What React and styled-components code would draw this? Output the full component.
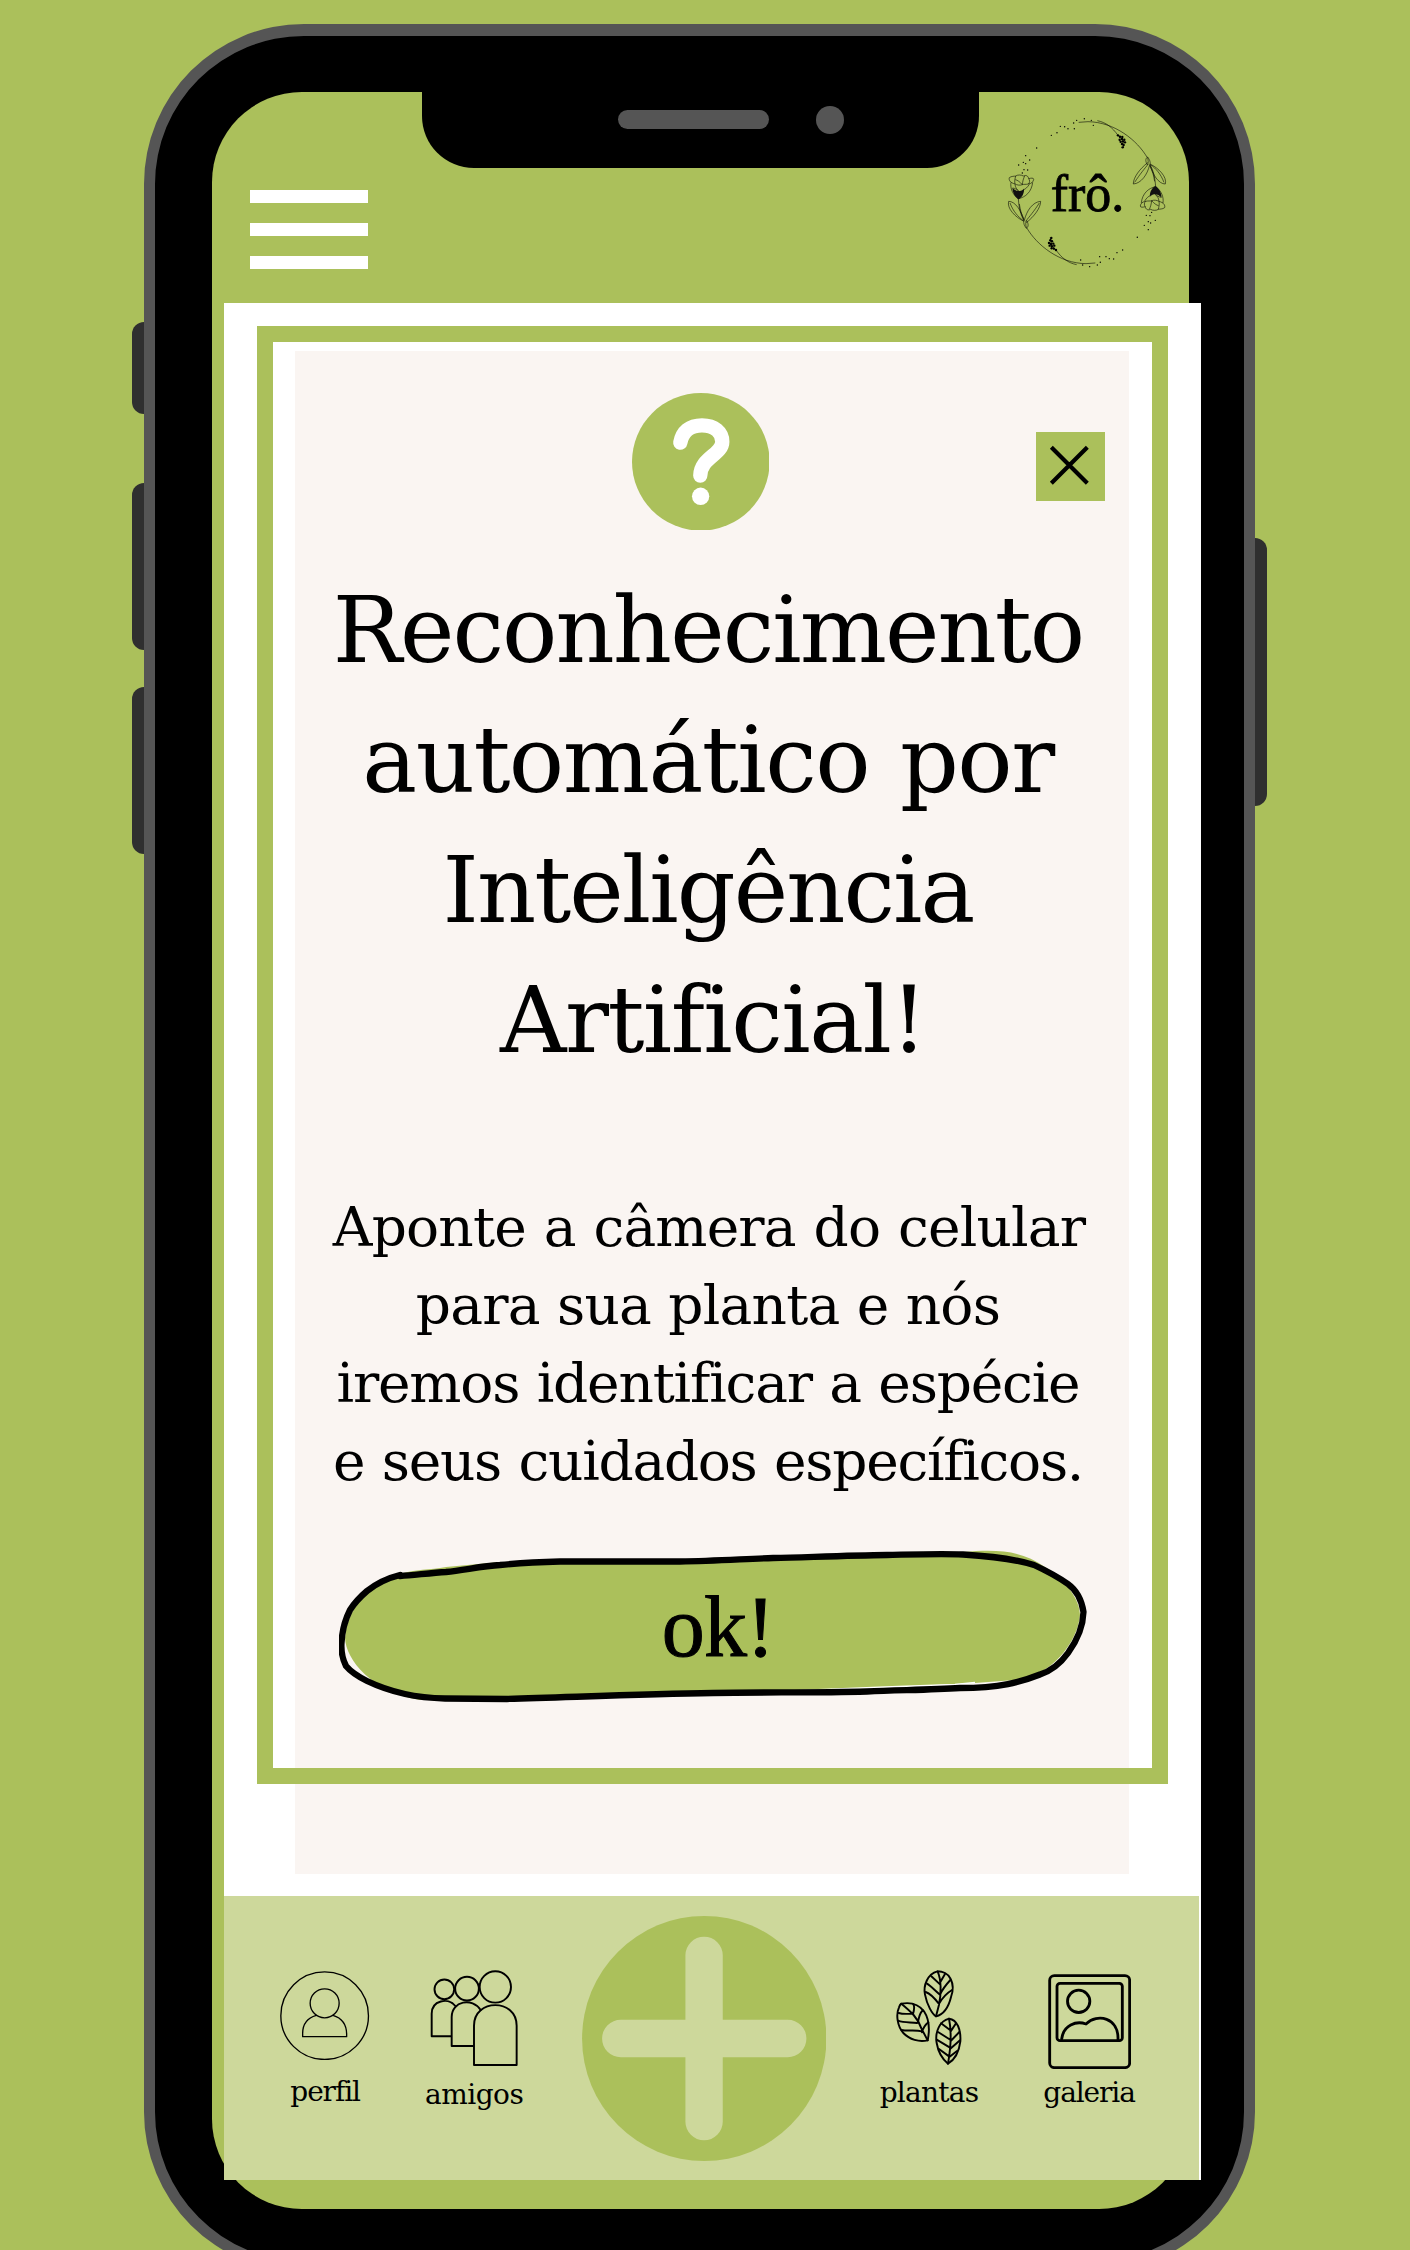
import React from "react";
import styled, { createGlobalStyle } from "styled-components";

const green = "#abc05b";
const paleGreen = "#cdd89b";
const slab = `"DejaVu Serif", "Liberation Serif", serif`;
const didone = `"Liberation Serif", serif`;

const GlobalStyle = createGlobalStyle`
  *, *::before, *::after { box-sizing: border-box; }
  body { margin: 0; background: ${green}; color: #000; }
  svg { display: block; }
`;

const Page = styled.main`
  display: flex;
  align-items: flex-start;
  width: 1410px;
  height: 2250px;
  padding: 24px 0 0 132px;
  overflow: hidden;
  background: ${green};
`;

const ButtonRail = styled.div`
  display: flex;
  flex-direction: column;
  flex: none;
  width: 12px;
  padding-top: ${(p) => p.$offset}px;
`;

const SideButton = styled.span`
  height: ${(p) => p.$height}px;
  margin-bottom: ${(p) => p.$gap || 0}px;
  background: #2f2f2f;
  border-radius: ${(p) => (p.$right ? "0 12px 12px 0" : "12px 0 0 12px")};
`;

const Body = styled.div`
  flex: none;
  width: 1111px;
  height: 2247.5px;
  padding: 56px 0 0 57px;
  border: 11.5px solid #555;
  border-width: 12px 11px 11px;
  border-radius: 160px;
  background: #000;
`;

const Screen = styled.div`
  width: 977px;
  height: 2116.5px;
  border-radius: 90px;
  background: ${green};
`;

const TopBar = styled.header`
  display: flex;
  align-items: flex-start;
  height: 211px;
  padding-left: 38px;
`;

const MenuButton = styled.button`
  display: grid;
  gap: 20px;
  flex: none;
  width: 118px;
  margin: 98px 54px 0 0;
  padding: 0;
  border: 0;
  background: none;
`;

const MenuLine = styled.span`
  height: 13px;
  background: #fff;
`;

const Notch = styled.div`
  display: flex;
  flex: none;
  width: 557px;
  height: 76px;
  padding: 13.5px 0 0 195.5px;
  border-radius: 0 0 52px 52px;
  background: #000;
`;

const Speaker = styled.span`
  width: 151.5px;
  height: 18.5px;
  margin-top: 4.5px;
  border-radius: 9.5px;
  background: #555;
`;

const Camera = styled.span`
  width: 28px;
  height: 28px;
  margin-left: 47px;
  border-radius: 50%;
  background: #555;
`;

const LogoArt = styled.svg`
  flex: none;
  width: 163.3px;
  height: 155px;
  margin: 23px 0 0 26px;
`;

const LogoText = styled.text`
  font: 156px ${didone};
  stroke: #000;
  stroke-width: 2.5px;
`;

const Content = styled.section`
  width: 977px;
  height: 1877px;
  margin-left: 11.7px;
  background: #fff;
`;

const Stack = styled.div`
  display: grid;
  height: 1593px;
  align-items: start;
  justify-items: start;
`;

const Card = styled.article`
  grid-area: 1 / 1;
  width: 834px;
  height: 1523px;
  margin: 48px 0 0 71.3px;
  padding-top: 41.7px;
  background: #faf5f2;
`;

const Frame = styled.div`
  grid-area: 1 / 1;
  width: 911px;
  height: 1457.5px;
  margin: 23px 0 0 33.6px;
  border: 16px solid ${green};
  pointer-events: none;
`;

const CardTop = styled.div`
  display: grid;
  grid-template-columns: 336.7px 137.6px 1fr;
  height: 137.6px;
`;

const HelpIcon = styled.svg`
  grid-column: 2;
  width: 137.6px;
  height: 137.6px;
`;

const CloseButton = styled.button`
  justify-self: end;
  width: 69px;
  height: 69px;
  margin: 39px 24px 0 0;
  padding: 0;
  border: 0;
  background: ${green};
`;

const Title = styled.h1`
  width: 826px;
  margin: 35.7px 0 0;
  font: 400 92px/130px ${slab};
  text-align: center;
`;

const Description = styled.p`
  width: 826px;
  margin: 102px 0 0;
  font: 400 55px/78px ${slab};
  text-align: center;
`;

const Line = styled.span`
  display: block;
  padding-left: ${(p) => p.$indent || 0}px;
  letter-spacing: ${(p) => p.$tracking}px;
  word-spacing: ${(p) => p.$wordGap || 0}px;
  white-space: nowrap;
`;

const OkButton = styled.button`
  display: grid;
  place-items: center;
  width: 750px;
  height: 160px;
  margin: 45px 0 0 44px;
  padding: 0;
  border: 0;
  background: none;
  color: #000;
`;

const OkShape = styled.svg`
  grid-area: 1 / 1;
  width: 750px;
  height: 160px;
`;

const OkLabel = styled.span`
  grid-area: 1 / 1;
  padding: 4px 0 0 8px;
  font: 86px/96px ${didone};
  letter-spacing: -0.8px;
  -webkit-text-stroke: 1px #000;
`;

const TabBar = styled.nav`
  display: grid;
  grid-template-columns: 149.5px 148.5px 311.5px 138.2px 182px;
  justify-items: center;
  align-items: start;
  width: 975.5px;
  height: 284.3px;
  padding-left: 26.7px;
  background: ${paleGreen};
`;

const Tab = styled.a`
  display: grid;
  justify-items: center;
  align-content: start;
  grid-template-rows: ${(p) => p.$labelTop}px 34px;
  padding-top: 74px;
  font: 28px/34px ${slab};
  letter-spacing: ${(p) => p.$tracking}px;
`;

const TabIcon = styled.svg`
  width: ${(p) => p.$w}px;
  height: ${(p) => p.$h}px;
  margin-top: ${(p) => p.$top || 0}px;
  fill: none;
  stroke: #000;
  stroke-width: ${(p) => p.$stroke};
  stroke-linecap: round;
  stroke-linejoin: round;
`;

const AddIcon = styled.svg`
  width: 244.5px;
  height: 245px;
  margin-top: 19.7px;
`;

const DOTS = [
  [137, 167], [149, 180], [116, 195], [130, 187], [137, 191], [132, 209],
  [143, 210], [127, 219], [170, 144], [214, 106], [231, 98], [241, 79],
  [254, 80], [264, 86], [283, 86], [281, 69], [290, 61], [313, 56],
  [334, 61], [340, 76],
];

const BERRIES = [
  [214, 414], [211, 421], [216, 424], [207, 429], [213, 432], [220, 431],
  [209, 437], [216, 439], [223, 437], [215, 445], [222, 446], [228, 450],
];

/* One half of the wreath; the other half is the same drawing turned around. */
function WreathHalf({ turned }) {
  return (
    <g transform={turned ? "rotate(180 321 278)" : undefined}>
      <g fill="none" stroke="#000" strokeWidth="2" strokeOpacity=".85">
        <path d="M140 383C170 435 238 490 318 491L346 489M228 450C245 474 264 489 290 494" />
        <path d="M115 296C117 325 122 345 132 362M118 312C121 330 124 343 132 358" />
        <path d="M132 364C106 352 80 325 86 304C106 304 124 332 132 362M90 309C100 335 114 350 130 362" />
        <path d="M133 361C140 332 158 306 182 304C182 324 162 350 139 368M178 309C162 334 148 350 137 364" />
        <path d="M132 361C129 370 134 378 139 385C147 380 145 370 140 362C136 366 137 374 139 383" />
        <path d="M105 252C90 248 86 240 88 233C94 228 104 229 107 228C112 224 124 224 130 228C138 224 145 228 146 236C153 234 161 233 161 238C160 246 154 251 145 252C138 254 131 252 127 254C119 257 111 255 105 252C103 244 105 236 107 228M127 254C120 246 112 240 106 239M127 254C128 244 130 236 134 228M145 252C150 248 150 240 146 236" />
        <path d="M93 247C90 265 98 284 115 296C136 292 155 276 158 247M105 253C106 262 110 268 116 272M98 264C106 265 112 269 116 274M148 253C142 262 137 267 131 269" />
      </g>
      <path d="M97 263C104 271 113 274 119 273C125 272 129 269 132 266C133 276 129 290 116 298C105 292 98 279 97 263Z" fill="#111" />
      <path d="M228 450L214 436L211 412" stroke="#000" strokeWidth="2" fill="none" />
      {BERRIES.map(([x, y]) => <circle key={`${x}-${y}`} cx={x} cy={y} r="3.6" />)}
      {DOTS.map(([x, y]) => <circle key={`${x}-${y}`} cx={x} cy={y} r="2.1" />)}
    </g>
  );
}

function Logo() {
  return (
    <LogoArt viewBox="75 45 490 465">
      <WreathHalf />
      <WreathHalf turned />
      <LogoText x="212" y="333">frô.</LogoText>
    </LogoArt>
  );
}

function Ok() {
  return (
    <OkButton>
      <OkShape viewBox="339 1545 750 160">
        <path fill={green} d="M400 1574C415 1569 430 1570 446 1567L500 1562L680 1560L963 1552C1000 1549 1022 1551 1045 1567C1066 1580 1080 1600 1080 1615C1078 1642 1050 1678 1015 1680L975 1683L827 1690L507 1699L420 1700C372 1692 346 1660 345 1638C348 1605 370 1585 400 1574Z" />
        <path fill="none" stroke="#fff" strokeWidth="1.6" d="M800 1690.5L885 1687L955 1684.5L975 1682.5" />
        <path fill="none" stroke="#000" strokeWidth="6.3" strokeLinejoin="round" d="M400 1576C414 1575 431 1573 446 1572C465 1570 482 1566 500 1565C520 1563 540 1562 560 1561.5L680 1561.5C715 1561 743 1559 773 1558C812 1557 850 1555.5 887 1555C912 1554.5 940 1553.5 963 1554.5C988 1556 1012 1558 1034 1565C1047 1571 1058 1577 1068 1584C1079 1592 1082 1602 1083.500 1612C1083 1628 1076 1642 1068 1653C1060 1664 1051 1671 1040 1674.500C1021 1682 1000 1688 960 1688C929 1690 898 1690 867 1691.5C815 1693 764 1692 713 1693C645 1694 576 1697 507 1699L445 1698.5C417 1698 390 1692 367 1681C359 1677 351 1672 346 1666C342 1658 341 1651 341.5 1643C342 1631 345 1620 350 1610C355 1602 360 1597 367 1591C377 1583 388 1578 400 1575Z" />
      </OkShape>
      <OkLabel>ok!</OkLabel>
    </OkButton>
  );
}

function Tabs() {
  return (
    <TabBar>
      <Tab $labelTop={105} $tracking={-1.1}>
        <TabIcon viewBox="242 272 268 268" $w={89.3} $h={89.3} $top={0.7} $stroke={4}>
          <circle cx="376" cy="406" r="131.5" />
          <circle cx="376" cy="369" r="43.5" />
          <path d="M351 405C327 412 309 430 310 462V469H442V462C442 430 424 412 401 405" />
        </TabIcon>
        perfil
      </Tab>
      <Tab $labelTop={108} $tracking={-0.5}>
        <TabIcon viewBox="691 269 264 289" $w={88} $h={96.3} $top={-0.4} $stroke={5.8}>
          <circle cx="734" cy="327" r="29.5" />
          <circle cx="802" cy="325" r="35.5" />
          <circle cx="887" cy="320" r="47" />
          <path d="M767 377C745 350 696 360 696 400V468H753" />
          <path d="M843 389C818 350 756 362 756 410V497H820" />
          <path d="M823 554V436C823 354 951 354 951 436V554Z" />
        </TabIcon>
        amigos
      </Tab>
      <AddIcon viewBox="69 107 733 735">
        <ellipse cx="435.5" cy="474.5" rx="366.5" ry="367.5" fill={green} />
        <path d="M435 225V724M185 474.500H686" stroke={paleGreen} strokeWidth="112" strokeLinecap="round" fill="none" />
      </AddIcon>
      <Tab $labelTop={106} $tracking={-0.75}>
        <TabIcon viewBox="171 271 197 284" $w={65.7} $h={94.7} $top={0.3} $stroke={5.8}>
          <path d="M295 275C266 282 252 318 258 345C264 376 280 404 291 410C312 405 328 385 336 352C343 333 342 312 335 298C328 282 310 275 295 275Z" />
          <path d="M296 276C307 300 307 342 300 375L291 410M277 290L303 314M264 312C277 320 290 335 304 346M260 337C275 342 288 357 300 373M318 283L304 307M334 301C324 312 312 325 304 343M339 331C324 340 310 355 300 372" />
          <path d="M187 372C215 367 240 375 255 395C270 418 273 448 266 482C240 488 212 480 193 460C175 440 170 405 180 383C182 377 184 374 187 372Z" />
          <path d="M187 372C215 395 237 415 247 446L266 482M179 400C192 404 205 403 217 402M177 423C196 430 215 427 234 430M187 451C208 455 228 450 249 455M223 374C228 382 225 393 222 403M252 392C240 400 241 414 236 429M268 428C258 436 252 446 249 458" />
          <path d="M330 417C303 424 287 455 293 490C298 520 312 540 327 552C347 540 360 518 364 485C366 450 355 420 330 417Z" />
          <path d="M330 417C338 455 336 500 327 552M306 431L334 452M297 457L335 481M293 480L333 504M300 508L330 530M350 432L335 455M361 457L335 484M363 482L333 508M354 514L330 533" />
        </TabIcon>
        plantas
      </Tab>
      <Tab $labelTop={106} $tracking={-1.1}>
        <TabIcon viewBox="626 281 249 286" $w={83} $h={95.3} $top={3.7} $stroke={8.5}>
          <rect x="631" y="286" width="240" height="276" rx="14" />
          <rect x="653" y="309" width="196" height="172" rx="9" />
          <circle cx="718" cy="363" r="33.5" />
          <path d="M667 476C672 435 710 420 740 431C774 397 839 412 836 479" />
        </TabIcon>
        galeria
      </Tab>
    </TabBar>
  );
}

export default function App() {
  return (
    <>
      <GlobalStyle />
      <Page>
        <ButtonRail $offset={298}>
          <SideButton $height={92} $gap={69} />
          <SideButton $height={167} $gap={37} />
          <SideButton $height={167} />
        </ButtonRail>
        <Body>
          <Screen>
            <TopBar>
              <MenuButton aria-label="menu">
                <MenuLine />
                <MenuLine />
                <MenuLine />
              </MenuButton>
              <Notch>
                <Speaker />
                <Camera />
              </Notch>
              <Logo />
            </TopBar>
            <Content>
              <Stack>
                <Card>
                  <CardTop>
                    <HelpIcon viewBox="995 98 413 413">
                      <circle cx="1201.500" cy="304.500" r="206.500" fill={green} />
                      <path d="M1140 247C1146 214 1168 195 1205 195C1243 195 1266 216 1266 244C1266 283 1200 293 1200 346" fill="none" stroke="#fff" strokeWidth="43" strokeLinecap="round" />
                      <circle cx="1201" cy="408" r="26" fill="#fff" />
                    </HelpIcon>
                    <CloseButton aria-label="fechar">
                      <svg viewBox="828 214 207 207" width="69" height="69">
                        <path d="M874 260L982 368M982 260L874 368" stroke="#000" strokeWidth="12.500" />
                      </svg>
                    </CloseButton>
                  </CardTop>
                  <Title>
                    <Line $tracking={-1.95}>Reconhecimento</Line>
                    <Line $tracking={-1.5} $wordGap={3}>automático por</Line>
                    <Line $tracking={-1.95}>Inteligência</Line>
                    <Line $tracking={-1.5} $indent={10}>Artificial!</Line>
                  </Title>
                  <Description>
                    <Line $tracking={-0.85} $wordGap={1.2} $indent={2}>Aponte a câmera do celular</Line>
                    <Line $tracking={-0.8} $wordGap={0.6}>para sua planta e nós</Line>
                    <Line $tracking={-1.2} $wordGap={1.2}>iremos identificar a espécie</Line>
                    <Line $tracking={-1.3} $wordGap={1.4}>e seus cuidados específicos.</Line>
                  </Description>
                  <Ok />
                </Card>
                <Frame />
              </Stack>
              <Tabs />
            </Content>
          </Screen>
        </Body>
        <ButtonRail $offset={514}>
          <SideButton $height={268} $right />
        </ButtonRail>
      </Page>
    </>
  );
}
